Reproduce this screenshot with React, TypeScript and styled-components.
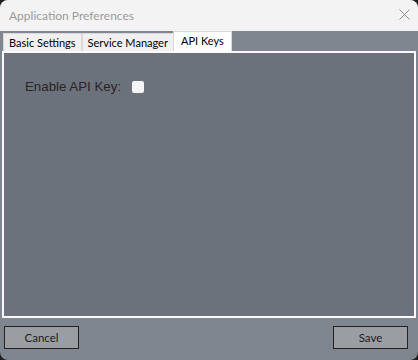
import React from "react";
import styled, { createGlobalStyle } from "styled-components";

const Global = createGlobalStyle`
  html, body { margin: 0; padding: 0; background: #1f1f1f; }
  body { font-family: "Lato", "Noto Sans", sans-serif; }
`;

const Window = styled.div`
  width: 418px;
  height: 360px;
  background: #7f8690;
  border-radius: 8px;
  overflow: hidden;
  display: flex;
  flex-direction: column;
`;

const TitleBar = styled.div`
  height: 31px;
  background: #f3f3f3;
  display: flex;
  align-items: center;
  justify-content: space-between;
  padding: 0 8px 0 9px;
  box-sizing: border-box;
`;

const Title = styled.span`
  font-size: 12px;
  color: #9b9b9b;
`;

const Close = styled.svg`
  width: 11px;
  height: 11px;
  margin-bottom: 2px;
`;

const Body = styled.div`
  flex: 1;
  display: flex;
  flex-direction: column;
  padding: 0 2px;
`;

const TabRow = styled.div`
  display: flex;
  align-items: flex-end;
  height: 20px;
  padding-left: 1px;
`;

const Tab = styled.div<{ $active?: boolean }>`
  height: ${(p) => (p.$active ? 20 : 18)}px;
  box-sizing: border-box;
  padding: 0 ${(p) => (p.$active ? 7 : 5)}px;
  background: ${(p) => (p.$active ? "#ffffff" : "#f0f0f0")};
  border: 1px solid #d9d9d9;
  border-bottom: none;
  font-size: 11px;
  color: #000;
  display: flex;
  align-items: center;
  ${(p) => (p.$active ? "padding-bottom: 2px; margin-left: -1px;" : "")}
`;

const Panel = styled.div`
  height: 267px;
  border: 2px solid #fafafa;
  background: #6b727c;
  box-sizing: border-box;
  padding: 26px 0 0 21px;
`;

const Field = styled.label`
  display: flex;
  align-items: center;
  gap: 11px;
  font-family: "Liberation Sans", Arial, sans-serif;
  font-size: 13.3px;
  color: #2b2326;
`;

const Check = styled.span`
  width: 12px;
  height: 12px;
  background: #f4f4f4;
  border-radius: 2px;
  display: inline-block;
`;

const Footer = styled.div`
  display: flex;
  justify-content: space-between;
  padding: 8px 8px 0 2px;
`;

const Button = styled.button`
  width: 75px;
  height: 23px;
  background: #9a9ea3;
  border: 1px solid #222;
  font-family: "Lato", sans-serif;
  font-size: 11.5px;
  color: #1a1a2a;
  padding: 0;
`;

export default function App() {
  return (
    <>
      <Global />
      <Window>
        <TitleBar>
          <Title>Application Preferences</Title>
          <Close viewBox="0 0 11 11">
            <path d="M0.5 0.5L10.5 10.5M10.5 0.5L0.5 10.5" stroke="#8a8a8a" strokeWidth="1" />
          </Close>
        </TitleBar>
        <Body>
          <TabRow>
            <Tab>Basic Settings</Tab>
            <Tab>Service Manager</Tab>
            <Tab $active>API Keys</Tab>
          </TabRow>
          <Panel>
            <Field>
              Enable API Key:
              <Check />
            </Field>
          </Panel>
          <Footer>
            <Button>Cancel</Button>
            <Button>Save</Button>
          </Footer>
        </Body>
      </Window>
    </>
  );
}
